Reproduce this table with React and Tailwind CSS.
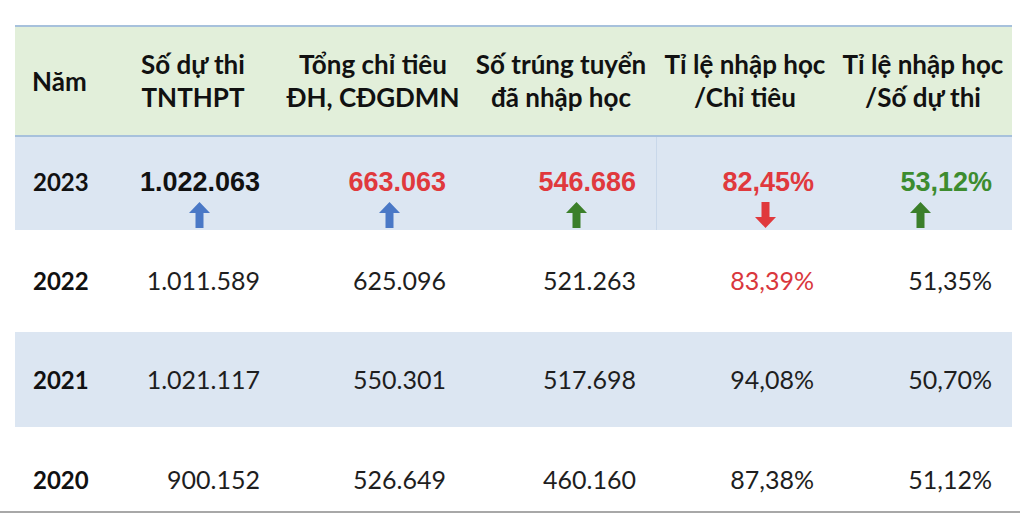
import React from "react";

const cols = "grid grid-cols-[91px_174px_186px_190px_178px_178px]";

function Arrow({ dir = "up", color, className = "" }) {
  const pts =
    dir === "up"
      ? "10.5,0 21,11 14.5,11 14.5,26 6.5,26 6.5,11 0,11"
      : "6.5,0 14.5,0 14.5,15 21,15 10.5,26 0,15 6.5,15";
  return (
    <svg width="21" height="26" viewBox="0 0 21 26" className={className}>
      <polygon points={pts} fill={color} />
    </svg>
  );
}

const lato = { fontFamily: "Lato, 'Open Sans', sans-serif" };
const arial = { fontFamily: "'Liberation Sans', Arial, sans-serif" };

function HeaderCell({ l1, l2 }) {
  return (
    <div className="flex flex-col items-center justify-center text-center leading-[33px]">
      <span className="whitespace-nowrap">{l1}</span>
      <span className="whitespace-nowrap">{l2}</span>
    </div>
  );
}

function TopCell({ value, color, arrowDir, arrowColor, mr, border = false }) {
  return (
    <div className={`flex flex-col items-end pt-[30px] pr-5 ${border ? "border-l border-[#c9d8ea]" : ""}`}>
      <div className={`h-[30px] flex items-center text-[27px] font-bold leading-none ${color}`} style={arial}>
        {value}
      </div>
      <Arrow dir={arrowDir} color={arrowColor} className={`mt-[5px] ${mr}`} />
    </div>
  );
}

function DataRow({ year, vals, bg, h }) {
  return (
    <div className={`${cols} ${bg} ${h} items-center text-[25px] text-[#1e1e1e]`} style={lato}>
      <div className="pl-[18px] text-[24px] font-bold text-[#111]">{year}</div>
      {vals.map((v, i) => (
        <div key={i} className={`text-right pr-5 ${v.c || ""}`}>
          {v.t}
        </div>
      ))}
    </div>
  );
}

export default function App() {
  return (
    <div className="w-[1020px] h-[513px] bg-white flex flex-col overflow-hidden">
      <div className="flex-1 overflow-hidden pt-[25px] pl-[15px]">
        <div className="w-[997px]">
          {/* header */}
          <div
            className={`${cols} h-[112px] bg-[#e2efda] border-t-2 border-b-2 border-[#a7c1dc] text-[26px] font-bold text-[#111]`}
            style={lato}
          >
            <div className="flex items-center pl-[17px]">Năm</div>
            <HeaderCell l1="Số dự thi" l2="TNTHPT" />
            <HeaderCell l1="Tổng chỉ tiêu" l2="ĐH, CĐGDMN" />
            <HeaderCell l1="Số trúng tuyển" l2="đã nhập học" />
            <HeaderCell l1="Tỉ lệ nhập học" l2="/Chỉ tiêu" />
            <HeaderCell l1="Tỉ lệ nhập học" l2="/Số dự thi" />
          </div>

          {/* 2023 */}
          <div className={`${cols} h-[93px] bg-[#dce6f2]`}>
            <div className="pt-[30px] pl-[18px]">
              <div className="h-[30px] flex items-center text-[24px] font-bold text-[#111]" style={lato}>
                2023
              </div>
            </div>
            <TopCell value="1.022.063" color="text-[#111]" arrowDir="up" arrowColor="#4a78c6" mr="mr-[50px]" />
            <TopCell value="663.063" color="text-[#e0393d]" arrowDir="up" arrowColor="#4a78c6" mr="mr-[46px]" />
            <TopCell value="546.686" color="text-[#e0393d]" arrowDir="up" arrowColor="#3b7f2a" mr="mr-[49px]" />
            <TopCell value="82,45%" color="text-[#e0393d]" arrowDir="down" arrowColor="#e0393d" mr="mr-[38px]" border />
            <TopCell value="53,12%" color="text-[#3d8c2f]" arrowDir="up" arrowColor="#3b7f2a" mr="mr-[61px]" />
          </div>

          <DataRow
            year="2022"
            bg="bg-white"
            h="h-[102px]"
            vals={[
              { t: "1.011.589" },
              { t: "625.096" },
              { t: "521.263" },
              { t: "83,39%", c: "text-[#d9373d]" },
              { t: "51,35%" },
            ]}
          />
          <DataRow
            year="2021"
            bg="bg-[#dce6f2]"
            h="h-[95px]"
            vals={[
              { t: "1.021.117" },
              { t: "550.301" },
              { t: "517.698" },
              { t: "94,08%" },
              { t: "50,70%" },
            ]}
          />
          <DataRow
            year="2020"
            bg="bg-white"
            h="h-[106px]"
            vals={[
              { t: "900.152" },
              { t: "526.649" },
              { t: "460.160" },
              { t: "87,38%" },
              { t: "51,12%" },
            ]}
          />
        </div>
      </div>
      <div className="h-[2px] bg-[#a8a8a8] shrink-0" />
    </div>
  );
}
